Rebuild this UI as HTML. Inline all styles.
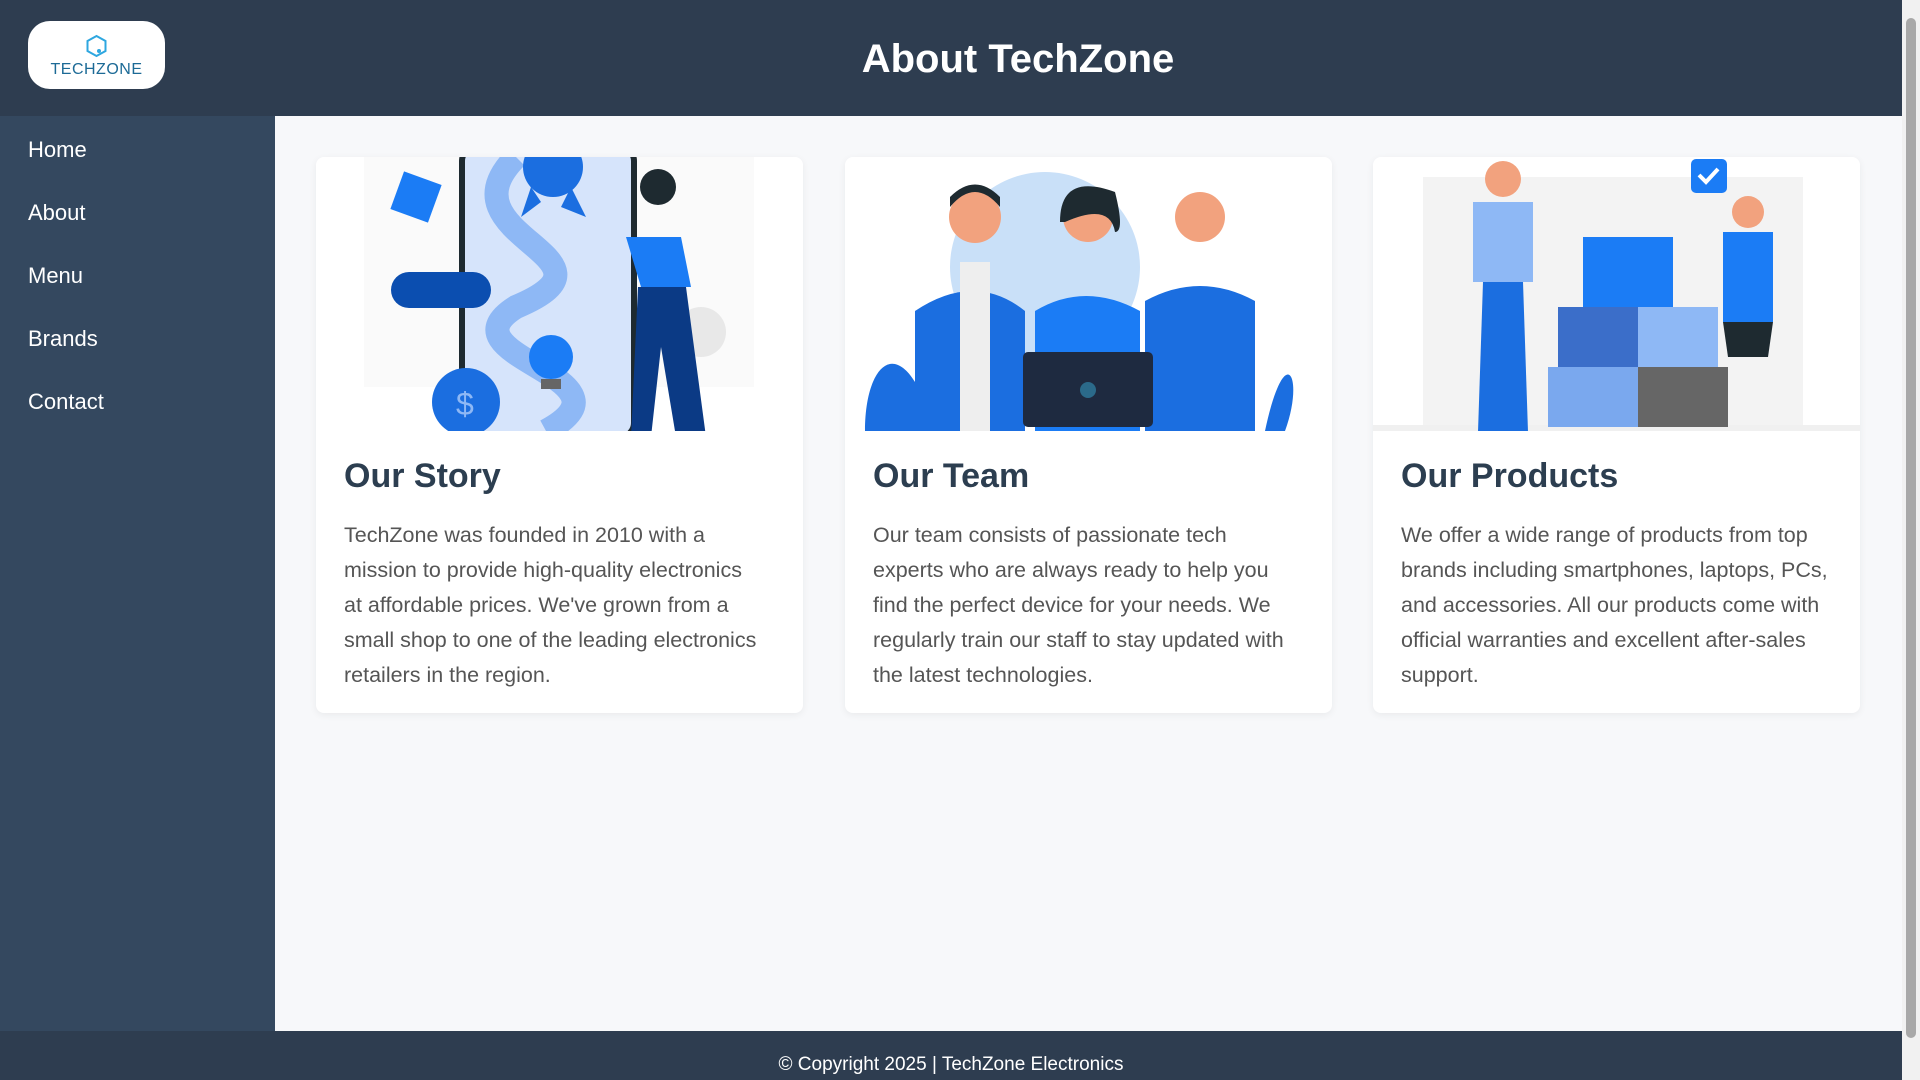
<!DOCTYPE html>
<html><head><meta charset="utf-8"><style>
*{box-sizing:border-box;margin:0;padding:0}
body{width:1920px;height:1080px;overflow:hidden;font-family:"Liberation Sans",sans-serif;background:#f7f8fa;position:relative}
.hdr{position:absolute;left:0;top:0;width:1902px;height:116px;background:#2e3d50}
.logo{position:absolute;left:28px;top:21px;width:137px;height:68px;background:#fff;border-radius:22px;text-align:center}
.logo span{position:absolute;left:0;right:0;top:40px;font-size:16px;color:#1c6a96;letter-spacing:0.5px}
.hdr h1{position:absolute;left:0;right:0;top:37px;text-align:center;color:#fff;font-size:40px;font-weight:bold;padding-left:134px}
.side{position:absolute;left:0;top:116px;width:275px;height:915px;background:#34485f}
.side a{position:absolute;left:28px;color:#fff;font-size:22px;text-decoration:none}
.card{position:absolute;top:157px;width:487px;height:556px;background:#fff;border-radius:8px;box-shadow:0 2px 8px rgba(0,0,0,.06);overflow:hidden}
.card svg{display:block}
.card h2{position:absolute;left:28px;top:300px;font-size:34px;color:#2c3e50;font-weight:bold}
.card p{position:absolute;left:28px;top:361px;width:418px;font-size:21.5px;line-height:35px;color:#555}
.ft{position:absolute;left:0;top:1031px;width:1902px;height:49px;background:#2e3d50;color:#fff;text-align:center;font-size:19px;padding-top:23px}
.sb{position:absolute;right:0;top:0;width:18px;height:1080px;background:#f1f1f1}
.sb div{position:absolute;left:4px;top:18px;width:10px;height:1020px;background:#a8a8a8;border-radius:5px}
</style></head><body>
<div class="hdr">
<div class="logo"><svg width="137" height="40" viewBox="0 0 137 40"><path d="M68.5 15 l9 5 v10 l-9 5 l-9 -5 v-10z" fill="none" stroke="#2ea7e0" stroke-width="2"/><circle cx="71" cy="30" r="2" fill="#2ea7e0"/></svg><span>TECHZONE</span></div>
<h1>About TechZone</h1>
</div>
<div class="side">
<a style="top:21px">Home</a><a style="top:84px">About</a><a style="top:147px">Menu</a><a style="top:210px">Brands</a><a style="top:273px">Contact</a>
</div>
<div class="card" style="left:316px">
<svg width="487" height="274"><rect x="48" y="0" width="390" height="230" fill="#fafafa"/><circle cx="385" cy="175" r="25" fill="#e8e8e8"/>
<rect x="146" y="-10" width="172" height="290" rx="14" fill="#d6e4fb" stroke="#1e2a30" stroke-width="6"/>
<path d="M200 0 C 120 80 320 100 200 150 C 120 200 330 220 230 274" stroke="#8eb8f5" stroke-width="24" fill="none"/>
<circle cx="237" cy="10" r="30" fill="#1b6ee0"/><path d="M215 30 l-10 30 l20 -15z M255 30 l15 30 l-25 -10z" fill="#1b6ee0"/>
<rect x="75" y="115" width="100" height="36" rx="18" fill="#0b4eb0"/><rect x="80" y="20" width="40" height="40" fill="#1b7cf5" transform="rotate(20 100 40)"/>
<circle cx="150" cy="245" r="34" fill="#1b6ee0"/><text x="140" y="258" fill="#8eb8f5" font-size="32" font-family="Liberation Sans">$</text>
<circle cx="235" cy="200" r="22" fill="#1b7cf5"/><rect x="225" y="222" width="20" height="10" fill="#666"/>
<circle cx="342" cy="30" r="18" fill="#1e2a30"/><path d="M310 80 h55 l10 50 h-50z" fill="#1b7cf5"/><path d="M322 130 h48 l20 150 h-30 l-15 -90 l-10 90 h-20z" fill="#0b3a85"/></svg>
<h2>Our Story</h2><p>TechZone was founded in 2010 with a mission to provide high-quality electronics at affordable prices. We've grown from a small shop to one of the leading electronics retailers in the region.</p></div>
<div class="card" style="left:845px">
<svg width="487" height="274"><circle cx="200" cy="110" r="95" fill="#c9e0f8"/><path d="M20 274 C 20 200 60 170 90 274z M440 274 C 460 220 440 180 420 274z" fill="#1b6ee0"/>
<circle cx="130" cy="60" r="26" fill="#f2a27e"/><path d="M105 50 q25 -30 50 0 v-10 q-25 -25 -50 0z" fill="#1e2a30"/><path d="M70 274 v-120 q60 -40 110 0 v120z" fill="#1b6ee0"/><rect x="115" y="105" width="30" height="169" fill="#eee"/>
<circle cx="243" cy="60" r="25" fill="#f2a27e"/><path d="M215 65 q0 -50 55 -30 q10 40 0 40 q-5 -30 -50 -10z" fill="#1e2a30"/><path d="M190 274 v-120 q50 -30 105 0 v120z" fill="#1b7cf5"/>
<circle cx="355" cy="60" r="25" fill="#f2a27e"/><path d="M300 274 v-130 q55 -30 110 0 v130z" fill="#1b6ee0"/>
<rect x="178" y="195" width="130" height="75" rx="5" fill="#1e2a40"/><circle cx="243" cy="233" r="8" fill="#2b6a8a"/></svg>
<h2>Our Team</h2><p style="width:425px">Our team consists of passionate tech experts who are always ready to help you find the perfect device for your needs. We regularly train our staff to stay updated with the latest technologies.</p></div>
<div class="card" style="left:1373px">
<svg width="487" height="274"><rect x="50" y="20" width="380" height="250" fill="#f3f3f3"/><rect x="0" y="268" width="487" height="6" fill="#f0f0f0"/>
<rect x="210" y="80" width="90" height="70" fill="#1b7cf5"/><rect x="185" y="150" width="80" height="60" fill="#3b6ec9"/><rect x="265" y="150" width="80" height="60" fill="#8eb8f5"/>
<rect x="175" y="210" width="90" height="60" fill="#7aa8ee"/><rect x="265" y="210" width="90" height="60" fill="#666"/>
<circle cx="130" cy="22" r="18" fill="#f2a27e"/><path d="M100 45 h60 v80 h-60z" fill="#8eb8f5"/><path d="M110 125 h40 l5 150 h-50z" fill="#1b6ee0"/>
<circle cx="375" cy="55" r="16" fill="#f2a27e"/><path d="M350 75 h50 v90 h-50z" fill="#1b7cf5"/><path d="M350 165 h50 l-5 35 h-40z" fill="#1e2a30"/>
<rect x="318" y="2" width="36" height="34" rx="5" fill="#1b7cf5"/><path d="M326 18 l7 7 l12 -13" stroke="#fff" stroke-width="4" fill="none"/></svg>
<h2>Our Products</h2><p style="width:432px">We offer a wide range of products from top brands including smartphones, laptops, PCs, and accessories. All our products come with official warranties and excellent after-sales support.</p></div>
<div class="ft">© Copyright 2025 | TechZone Electronics</div>
<div class="sb"><div></div></div>
</body></html>
